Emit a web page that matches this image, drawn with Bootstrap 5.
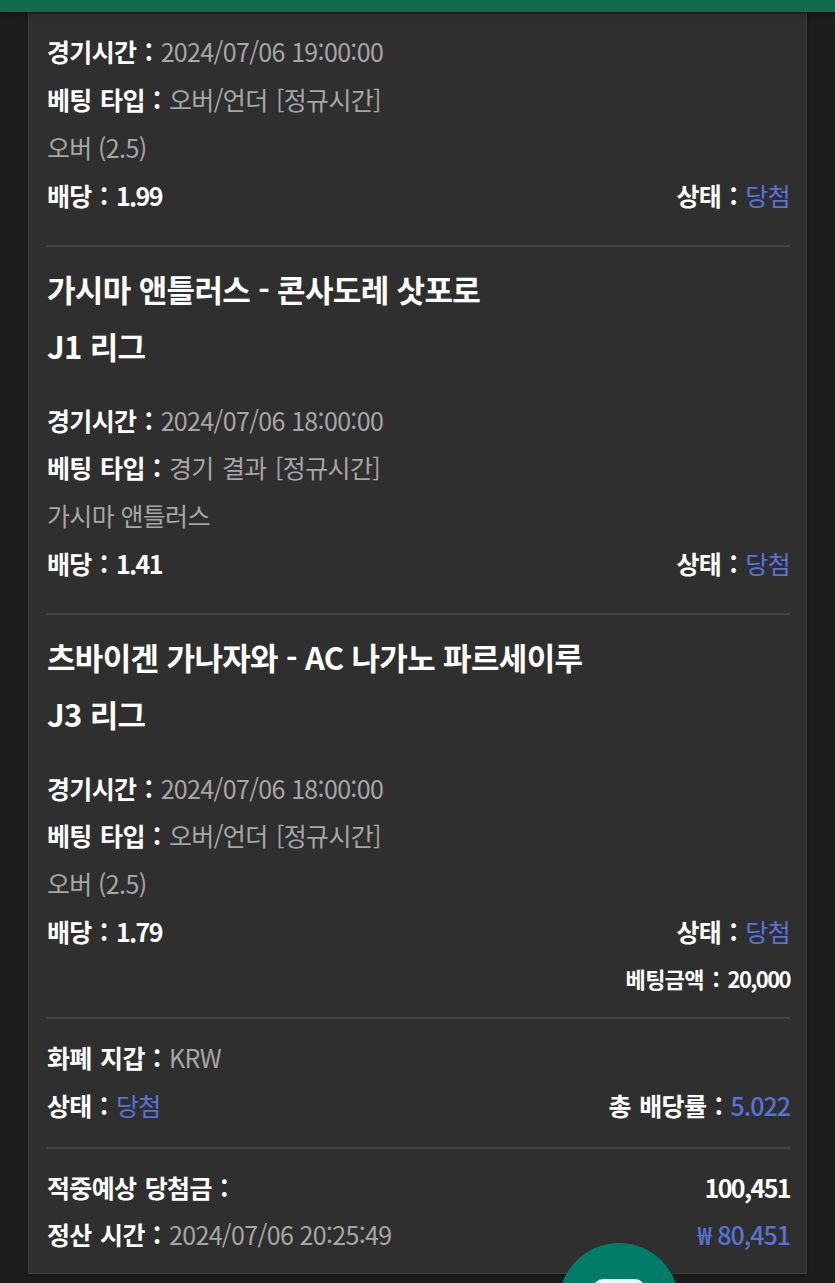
<!DOCTYPE html>
<html lang="ko">
<head>
    <meta charset="UTF-8">
    <meta name="viewport" content="width=device-width, initial-scale=1.0">
    <title>Bet detail</title>
    <link href="https://cdn.jsdelivr.net/npm/bootstrap@5.3.0/dist/css/bootstrap.min.css" rel="stylesheet">
    <script src="https://cdn.jsdelivr.net/npm/bootstrap@5.3.0/dist/js/bootstrap.bundle.min.js"></script>
    <style>
        html, body {
            height: 1283px;
            overflow: hidden;
        }
        body {
            position: relative;
            background-color: #1d1d1d;
            font-family: "Noto Sans CJK KR", "Noto Sans", sans-serif;
            font-size: 25px;
            letter-spacing: -0.65px;
            color: #fff;
        }
        .top-strip {
            height: 12px;
            background-color: #136b4f;
            box-shadow: 0 1px 4px rgba(0, 0, 0, .6);
            position: relative;
        }
        .bet-panel {
            margin: 0 28px;
            height: 1262px;
            padding: 15px 16px 0 17px;
            background-color: #2f2f2f;
            border: 1px solid #3f3f3f;
            border-top: 0;
            box-shadow: 0 1px 4px rgba(0, 0, 0, .4);
        }
        .info-row {
            height: 48px;
            line-height: 48px;
            white-space: nowrap;
            word-spacing: 2px;
            padding-left: 1px;
        }
        .info-row.tail {
            height: 47px;
        }
        .info-row b, .game-title {
            font-weight: 700;
        }
        .soft {
            color: #a6a6a6;
            font-weight: 400;
        }
        .stamp {
            word-spacing: 0;
        }
        .won {
            color: #5872d6;
            font-weight: 400;
        }
        .won-bold {
            color: #5872d6;
            font-weight: 500;
            letter-spacing: -1px;
        }
        .info-row b.num, .small-row b.num {
            font-weight: 700;
            letter-spacing: -1.6px;
        }
        .game-title {
            font-size: 31px;
            line-height: 57px;
            height: 57px;
            white-space: nowrap;
            padding-left: 1px;
        }
        .divider {
            height: 2px;
            background-color: #434343;
        }
        .game-sep {
            margin-top: 26px;
            margin-bottom: 13px;
        }
        .title-end {
            margin-bottom: 22px;
        }
        .small-row {
            font-size: 22px;
            height: 44px;
            line-height: 44px;
            margin-top: 1px;
            word-spacing: 3px;
        }
        .foot-sep-a {
            margin-top: 17px;
            margin-bottom: 14px;
        }
        .foot-sep-b {
            margin-top: 18px;
            margin-bottom: 14px;
        }
        .fab-clip {
            position: absolute;
            left: 559px;
            top: 1243px;
            width: 120px;
            height: 40px;
            overflow: hidden;
        }
        .fab-circle {
            width: 120px;
            height: 120px;
            border-radius: 50%;
            background-color: #007c69;
            padding: 36px 34px 0;
        }
        .fab-icon {
            height: 40px;
            border-radius: 10px;
            background-color: #e6fbf7;
        }
    </style>
</head>
<body>
    <div class="top-strip"></div>
    <div class="bet-panel">
        <div class="info-row"><b>경기시간 :</b> <span class="soft stamp">2024/07/06 19:00:00</span></div>
        <div class="info-row"><b>베팅 타입 :</b> <span class="soft">오버/언더 [정규시간]</span></div>
        <div class="info-row soft stamp">오버 (2.5)</div>
        <div class="info-row d-flex justify-content-between">
            <span><b>배당 :</b> <b class="num">1.99</b></span>
            <span><b>상태 :</b> <span class="won">당첨</span></span>
        </div>
        <div class="divider game-sep"></div>

        <div class="game-title">가시마 앤틀러스 - 콘사도레 삿포로</div>
        <div class="game-title title-end">J1 리그</div>
        <div class="info-row tail"><b>경기시간 :</b> <span class="soft stamp">2024/07/06 18:00:00</span></div>
        <div class="info-row"><b>베팅 타입 :</b> <span class="soft">경기 결과 [정규시간]</span></div>
        <div class="info-row soft stamp">가시마 앤틀러스</div>
        <div class="info-row d-flex justify-content-between">
            <span><b>배당 :</b> <b class="num">1.41</b></span>
            <span><b>상태 :</b> <span class="won">당첨</span></span>
        </div>
        <div class="divider game-sep"></div>

        <div class="game-title">츠바이겐 가나자와 - AC 나가노 파르세이루</div>
        <div class="game-title title-end">J3 리그</div>
        <div class="info-row tail"><b>경기시간 :</b> <span class="soft stamp">2024/07/06 18:00:00</span></div>
        <div class="info-row"><b>베팅 타입 :</b> <span class="soft">오버/언더 [정규시간]</span></div>
        <div class="info-row soft stamp">오버 (2.5)</div>
        <div class="info-row d-flex justify-content-between">
            <span><b>배당 :</b> <b class="num">1.79</b></span>
            <span><b>상태 :</b> <span class="won">당첨</span></span>
        </div>
        <div class="small-row text-end"><b>베팅금액 :</b> <b class="num">20,000</b></div>
        <div class="divider foot-sep-a"></div>

        <div class="info-row"><b>화폐 지갑 :</b> <span class="soft">KRW</span></div>
        <div class="info-row d-flex justify-content-between">
            <span><b>상태 :</b> <span class="won">당첨</span></span>
            <span><b>총 배당률 :</b> <span class="won-bold">5.022</span></span>
        </div>
        <div class="divider foot-sep-b"></div>

        <div class="info-row tail d-flex justify-content-between">
            <b>적중예상 당첨금 :</b>
            <b class="num">100,451</b>
        </div>
        <div class="info-row d-flex justify-content-between">
            <span><b>정산 시간 :</b> <span class="soft stamp">2024/07/06 20:25:49</span></span>
            <span class="won-bold">₩ 80,451</span>
        </div>
    </div>
    <div class="fab-clip"><div class="fab-circle"><div class="fab-icon"></div></div></div>
</body>
</html>
